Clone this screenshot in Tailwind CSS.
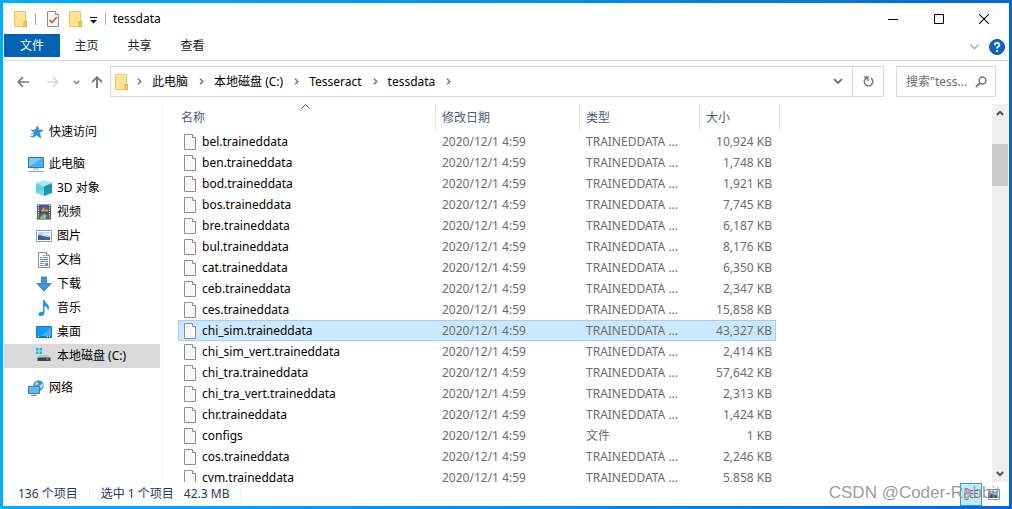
<!DOCTYPE html>
<html lang="zh-CN">
<head>
<meta charset="utf-8">
<title>tessdata</title>
<script src="https://cdn.jsdelivr.net/npm/@tailwindcss/browser@4"></script>
</head>
<body class="relative flex h-screen flex-col overflow-hidden bg-linear-to-r from-[#00adff] via-[#0090f5] to-[#0068dc] p-[3px] font-['Noto_Sans','Noto_Sans_CJK_SC',sans-serif] text-xs text-black">
<svg class="hidden">
  <symbol id="folder" viewBox="0 0 13 16"><path d="M.5.5h11v9.300h1v5.700H.5z" fill="#ffe396" stroke="#edc55c"/><path d="M10 10.500h2.500v5H10z" fill="#f3cb60" stroke="#e3b341"/></symbol>
  <symbol id="file" viewBox="0 0 12 16"><path d="M.5.5h8l3 3v12H.5z" fill="#f8f9fa" stroke="#8e8e8e"/><path d="M8.500.5v3h3" fill="#fff" stroke="#8e8e8e"/></symbol>
  <symbol id="crumb" viewBox="0 0 5 7"><path d="M1 .7 3.800 3.500 1 6.300" fill="none" stroke="#777" stroke-width="1.500"/></symbol>
</svg>
<div class="flex min-h-0 flex-1 flex-col bg-white">
  <header class="flex h-[31px] shrink-0 items-center pl-[11px]">
    <svg class="h-4 w-[13px]"><use href="#folder"/></svg>
    <span class="ml-2 h-3 w-px bg-[#aaa]"></span>
    <button aria-label="属性" class="ml-[11px]"><svg class="h-4 w-3" viewBox="0 0 12 16"><path d="M.5.5h8l3 3v12H.5z" fill="#f4f5f8" stroke="#8a8a8a"/><path d="M8.500.5v3h3" fill="#fff" stroke="#8a8a8a"/><path d="m2.500 9 2.500 2.500L9.800 6" fill="none" stroke="#e8601c" stroke-width="1.800"/></svg></button>
    <button aria-label="新建文件夹" class="ml-[10px]"><svg class="h-4 w-[13px]"><use href="#folder"/></svg></button>
    <button aria-label="自定义快速访问工具栏" class="ml-2"><svg class="h-4 w-[7px]" viewBox="0 0 7 16"><path d="M0 6.500h7" stroke="#111"/><path d="M0 9h7l-3.500 3.500z" fill="#111"/></svg></button>
    <span class="ml-2 h-3 w-px bg-[#aaa]"></span>
    <h1 class="ml-[7px]">tessdata</h1>
    <div class="ml-auto flex h-full pr-[2px]">
      <button aria-label="最小化" class="grid w-[46px] place-items-center"><svg class="size-[10px]" viewBox="0 0 10 10"><path d="M0 5.500h10" stroke="#000"/></svg></button>
      <button aria-label="最大化" class="grid w-[45px] place-items-center"><svg class="size-[10px]" viewBox="0 0 10 10"><path d="M.5.5h9v9h-9z" fill="none" stroke="#000"/></svg></button>
      <button aria-label="关闭" class="grid w-[46px] place-items-center"><svg class="size-[10px]" viewBox="0 0 10 10"><path d="m0 0 10 10M10 0 0 10" stroke="#000" stroke-width="1.100"/></svg></button>
    </div>
  </header>
  <nav aria-label="功能区" class="flex h-[27px] shrink-0 border-b border-[#dadbdc] pl-px text-[#222]">
    <button class="h-[23px] w-14 bg-[#0063b1] text-white">文件</button>
    <button class="h-[23px] w-[53px]">主页</button>
    <button class="h-[23px] w-[53px]">共享</button>
    <button class="h-[23px] w-[53px]">查看</button>
    <button aria-label="展开功能区" class="ml-auto"><svg class="h-[6px] w-[9px]" viewBox="0 0 9 6"><path d="m.5.7 4 4 4-4" fill="none" stroke="#999" stroke-width="1.200"/></svg></button>
    <button aria-label="帮助" class="mr-1 ml-[10px]"><svg class="size-4" viewBox="0 0 16 16"><circle cx="8" cy="8" r="7.500" fill="#0b67c2" stroke="#0a4f96"/><path d="M5.800 6.200c0-3 4.600-3 4.600-.3 0 1.700-2.300 1.600-2.300 3.700" fill="none" stroke="#fff" stroke-width="1.800"/><circle cx="8.100" cy="11.900" r="1.100" fill="#fff"/></svg></button>
  </nav>
  <div class="flex h-[43px] shrink-0 items-start pt-[5px] pr-[13px]">
    <div class="flex h-8 w-[107px] items-center pl-[14px]">
      <button aria-label="后退"><svg class="size-3" viewBox="0 0 12 12"><path d="M12 6H1.500M6 1.200 1.200 6 6 10.800" fill="none" stroke="#777" stroke-width="1.700"/></svg></button>
      <button aria-label="前进" class="ml-[18px]"><svg class="size-3" viewBox="0 0 12 12"><path d="M0 6h10.500M6 1.200 10.800 6 6 10.800" fill="none" stroke="#d8d8d8" stroke-width="1.700"/></svg></button>
      <button aria-label="最近位置" class="ml-[14px]"><svg class="h-[5px] w-[7px]" viewBox="0 0 7 5"><path d="m.7.8 2.800 2.800L6.300.8" fill="none" stroke="#888" stroke-width="1.500"/></svg></button>
      <button aria-label="上移" class="ml-[11px]"><svg class="h-3 w-[12px]" viewBox="0 0 12 12"><path d="M6 12V1.500M1 6.200l5-5 5 5" fill="none" stroke="#777" stroke-width="1.900"/></svg></button>
    </div>
    <div class="flex h-[31px] flex-1 items-center border border-[#d9d9d9] pl-1">
      <svg class="mr-[9px] h-4 w-[13px]"><use href="#folder"/></svg>
      <svg class="h-[7px] w-[5px]"><use href="#crumb"/></svg>
      <button class="mr-[11px] ml-[10px]">此电脑</button>
      <svg class="h-[7px] w-[5px]"><use href="#crumb"/></svg>
      <button class="mr-[11px] ml-[10px]">本地磁盘 (C:)</button>
      <svg class="h-[7px] w-[5px]"><use href="#crumb"/></svg>
      <button class="mr-[11px] ml-[10px]">Tesseract</button>
      <svg class="h-[7px] w-[5px]"><use href="#crumb"/></svg>
      <button class="mr-[11px] ml-[10px]">tessdata</button>
      <svg class="h-[7px] w-[5px]"><use href="#crumb"/></svg>
      <button aria-label="以前的位置" class="mr-[9px] ml-auto"><svg class="h-[7px] w-[10px]" viewBox="0 0 10 7"><path d="m1 1 4 4 4-4" fill="none" stroke="#777" stroke-width="1.900"/></svg></button>
      <button aria-label="刷新" class="grid h-full w-[31px] place-items-center border-l border-[#d9d9d9]"><svg class="size-[11px]" viewBox="0 0 11 11"><path d="M8.200 2.300A4.200 4.200 0 1 1 2 3.400L4.300 1.500" fill="none" stroke="#777" stroke-width="1.600"/><path d="M.8.900h4v4" fill="none" stroke="#777" stroke-width="1.500"/></svg></button>
    </div>
    <label class="ml-3 flex h-[31px] w-[100px] items-center border border-[#d9d9d9] pr-2 pl-[9px]">
      <input type="text" aria-label="搜索" placeholder='搜索"tess...' class="w-0 flex-1 outline-none placeholder:text-[#6d6d6d]">
      <svg class="size-3" viewBox="0 0 12 12"><circle cx="7.500" cy="4.500" r="3.400" fill="none" stroke="#777" stroke-width="1.500"/><path d="M5 7 .8 11.200" stroke="#777" stroke-width="1.900"/></svg>
    </label>
  </div>
  <div class="flex min-h-0 flex-1">
    <aside class="w-[160px] shrink-0 border-r border-[#f3f3f3] pt-4 pr-[2px] pl-px">
      <a href="#" class="flex h-6 items-center gap-[5px] pl-6"><svg class="size-4" viewBox="0 0 16 16"><path d="m9.500 2 1.200 4 4.300.2-3.500 2.600 1.200 5.200-4-2.900-4 2.400 1.500-4.700L3 6.200l4.300-.1z" fill="#2796e6" stroke="#1579c8" stroke-width=".6"/><path d="M4 7.500h2M2.500 10H6M2 12.500h3.500" stroke="#5bb4ef"/></svg>快速访问</a>
      <a href="#" class="mt-2 flex h-6 items-center gap-[5px] pl-6"><svg class="size-4" viewBox="0 0 16 16"><path d="M.5 1.500h15v10H.5z" fill="#42b1fa" stroke="#3a7399"/><path d="M1 11V2h13z" fill="#78cbff"/><path d="M5 13h6M0 15.500h16" stroke="#8ba0b5"/></svg>此电脑</a>
      <a href="#" class="flex h-6 items-center gap-[5px] pl-8"><svg class="size-4" viewBox="0 0 16 16"><path d="m8 0 8 3-8 3.500L0 3z" fill="#a8eaf2"/><path d="m0 3 8 3.500V16l-8-3z" fill="#5fd2e2"/><path d="m16 3-8 3.500V16l8-3z" fill="#1799b4"/><path d="m0 13 8-3v6z" fill="#8ee5ee" opacity=".6"/></svg>3D 对象</a>
      <a href="#" class="flex h-6 items-center gap-[5px] pl-8"><svg class="size-4" viewBox="0 0 16 16"><path d="M1 .5h14v15H1z" fill="#404040"/><path d="M4 1h8v6.500H4zM4 8.500h8V15H4z" fill="#345caa"/><path d="M2.500 1v14M13.500 1v14" stroke="#eee" stroke-width="1.500" stroke-dasharray="1.300 1"/><path d="M5 6.500 8 3l4 3v1.500H5z" fill="#d9a52c"/><path d="M4 13 8 9.500l2 2V15H4z" fill="#7bb661"/><circle cx="9.500" cy="4.500" r="1.500" fill="#c8492e"/><circle cx="9" cy="12" r="1.500" fill="#e0b23d"/></svg>视频</a>
      <a href="#" class="flex h-6 items-center gap-[5px] pl-8"><svg class="size-4" viewBox="0 0 16 16"><path d="M.5 2.500h15v11H.5z" fill="#fff" stroke="#999"/><path d="M2 4h12v8H2z" fill="#b5dbf8"/><path d="M2 7c4 0 5 2 12 2v3H2z" fill="#3b6c86"/><path d="M2 10.500h12V12H2z" fill="#2f67b5"/><path d="M8 5h6v2H8z" fill="#e5f4ff"/></svg>图片</a>
      <a href="#" class="flex h-6 items-center gap-[5px] pl-8"><svg class="size-4" viewBox="0 0 16 16"><path d="M2.500.5h8l3 3v12h-11z" fill="#fff" stroke="#8a8a8a"/><path d="M10.500.5v3h3" fill="#eee" stroke="#8a8a8a"/><path d="M7 3.500h2M7 5.500h5M4 9.500h8M4 11.500h4M4 13.500h4" stroke="#7d93a8"/><path d="M4 5.500h2M4 7.500h8" stroke="#2d91d5"/><path d="M9 11h3v3H9z" fill="#3aa0dc"/></svg>文档</a>
      <a href="#" class="flex h-6 items-center gap-[5px] pl-8"><svg class="size-4" viewBox="0 0 16 16"><path d="M5.500 1h5v6.500h4.700L8 15.200.8 7.500h4.700z" fill="#3f93dc" stroke="#2c74b8" stroke-width=".8"/></svg>下载</a>
      <a href="#" class="flex h-6 items-center gap-[5px] pl-8"><svg class="size-4" viewBox="0 0 16 16"><path d="M7 0h1.500c.5 3 4.500 4 4.500 7.500 0 1.300-.6 2.400-1.400 3.300.6-2.500-.8-4-3.100-4.800V13c0 3.500-6 4-6 1.200 0-2 2.500-3 4.500-2.400z" fill="#129bec"/></svg>音乐</a>
      <a href="#" class="flex h-6 items-center gap-[5px] pl-8"><svg class="size-4" viewBox="0 0 16 16"><path d="M.5 2.500h15v11H.5z" fill="#129cf4" stroke="#1581c6"/><path d="M15 3v9L5 12z" fill="#3db0fb"/><path d="M1 13h14" stroke="#0c5e94"/><path d="M2 12.500h1M11 12.500h1M13 12.500h1" stroke="#fff"/></svg>桌面</a>
      <a href="#" aria-current="page" class="flex h-6 items-center gap-[5px] bg-[#d9d9d9] pl-8"><svg class="size-4" viewBox="0 0 16 16"><path d="M0 0h2.500v2.500H0zM3.500 0H6v2.500H3.500zM0 3.500h2.500V6H0zM3.500 3.500H6V6H3.500z" fill="#15b4ea"/><path d="M4 7h8l2.500 3H1.500z" fill="#bfc3c6"/><path d="M1.500 9.500h13V13h-13z" fill="#3d4246"/><path d="M10.500 11h2" stroke="#6fe36f"/></svg>本地磁盘 (C:)</a>
      <a href="#" class="mt-2 flex h-6 items-center gap-[5px] pl-6"><svg class="size-4" viewBox="0 0 16 16"><circle cx="10.500" cy="5.500" r="5.300" fill="#4c8db2"/><path d="M7 3c2-2 4-1 3 1S7 6 7 3M11 6l4-3c1 2 0 4-2 6z" fill="#a9d9ec"/><path d="M.5 6.500h11v7H.5z" fill="#5ab9f7" stroke="#3a80b0"/><path d="M3 15.500h6M6 14v1.500" stroke="#7b93a8"/></svg>网络</a>
    </aside>
    <main class="flex min-w-0 flex-1">
      <div class="min-w-0 flex-1 overflow-hidden pl-[15px]">
        <table class="w-[602px] table-fixed border-separate border-spacing-0">
          <colgroup><col class="w-[258px]"><col class="w-[144px]"><col class="w-[120px]"><col class="w-[76px]"><col class="w-1"></colgroup>
          <thead class="text-[#4c607a]">
            <tr class="h-[27px] text-left">
              <th class="relative border-r border-[#e5e5e5] py-0 pl-[3px] font-normal">名称<svg class="absolute top-0 left-[123px] h-[5px] w-[9px]" viewBox="0 0 9 5"><path d="m.5 4.500 4-4 4 4" fill="none" stroke="#555"/></svg></th>
              <th class="border-r border-[#e5e5e5] py-0 pl-[6px] font-normal">修改日期</th>
              <th class="border-r border-[#e5e5e5] py-0 pl-[6px] font-normal">类型</th>
              <th colspan="2" class="border-r border-[#e5e5e5] py-0 pl-[6px] font-normal">大小</th>
            </tr>
          </thead>
          <tbody id="files"></tbody>
        </table>
      </div>
      <div class="flex w-[17px] shrink-0 flex-col pr-px">
        <div class="flex flex-1 flex-col items-center bg-[#f0f0f0]">
          <button aria-label="向上滚动" class="grid h-[17px] place-items-center"><svg class="h-[6px] w-2" viewBox="0 0 8 6"><path d="m.8 5 3.200-3.200L7.200 5" fill="none" stroke="#505050" stroke-width="2"/></svg></button>
          <div class="mt-[23px] h-[42px] w-full bg-[#cdcdcd]"></div>
          <button aria-label="向下滚动" class="mt-auto grid h-[17px] place-items-center"><svg class="h-[6px] w-2" viewBox="0 0 8 6"><path d="m.8 1 3.200 3.200L7.200 1" fill="none" stroke="#505050" stroke-width="2"/></svg></button>
        </div>
      </div>
    </main>
  </div>
  <footer class="flex h-6 shrink-0 items-center pr-[9px] pl-[15px] text-[#1e395b]">
    <span>136 个项目</span>
    <span class="mx-[11px] h-3 w-px bg-[#f0f0f0]"></span>
    <span>选中 1 个项目</span><span class="ml-[10px]">42.3 MB</span>
    <span class="mx-[11px] h-3 w-px bg-[#f0f0f0]"></span>
    <button aria-label="详细信息" class="ml-auto grid h-[23px] w-[22px] place-items-center border border-[#26a0da] bg-[#c5e6f5]"><svg class="h-3 w-4" viewBox="0 0 16 12"><path d="M2 .5h3v11H2z" fill="#fff" stroke="#888"/><path d="M3 3h1M3 6h1" stroke="#456"/><path d="M3 10h1" stroke="#d33"/><path d="M7 2.500h3m2 0h3M7 5.500h3m2 0h3M7 9.500h3m2 0h3" stroke="#567"/></svg></button>
    <button aria-label="大缩略图" class="ml-[6px]"><svg class="h-[11px] w-3" viewBox="0 0 12 11"><path d="M.5.5h11v10H.5z" fill="#fff" stroke="#8a93a0"/><path d="M1 2h8v7H1z" fill="#8bbfe8"/><path d="M1 5c3-1 4 2 8 1v3H1z" fill="#27516e"/></svg></button>
  </footer>
</div>
<p class="pointer-events-none absolute right-[12px] bottom-1 font-['Liberation_Sans',sans-serif] text-[17px] leading-6 text-[#8f8f8f]/90">CSDN @Coder-Rabbit</p>
<script>
const files = [
  ["bel.traineddata", "10,924 KB"], ["ben.traineddata", "1,748 KB"], ["bod.traineddata", "1,921 KB"],
  ["bos.traineddata", "7,745 KB"], ["bre.traineddata", "6,187 KB"], ["bul.traineddata", "8,176 KB"],
  ["cat.traineddata", "6,350 KB"], ["ceb.traineddata", "2,347 KB"], ["ces.traineddata", "15,858 KB"],
  ["chi_sim.traineddata", "43,327 KB"], ["chi_sim_vert.traineddata", "2,414 KB"], ["chi_tra.traineddata", "57,642 KB"],
  ["chi_tra_vert.traineddata", "2,313 KB"], ["chr.traineddata", "1,424 KB"], ["configs", "1 KB"],
  ["cos.traineddata", "2,246 KB"], ["cym.traineddata", "5,858 KB"]
];
document.getElementById("files").innerHTML = files.map(([name, size]) => {
  const on = name === "chi_sim.traineddata";
  const c = on ? "border-y border-[#99d1ff] bg-[#cce8ff]" : "border-y border-transparent";
  return `<tr class="h-[21px] text-[#6d6d6d]">
    <td class="p-0 ${c} ${on ? "border-l" : "border-l border-l-transparent"}"><div class="flex h-[19px] items-center gap-[6px] pl-[5px] text-black"><svg class="h-4 w-3"><use href="#file"/></svg>${name}</div></td>
    <td class="py-0 pr-0 pl-[6px] leading-[19px] ${c}">2020/12/1 4:59</td>
    <td class="truncate py-0 pr-0 pl-[6px] leading-[19px] ${c}">${name === "configs" ? "文件" : "TRAINEDDATA ..."}</td>
    <td class="py-0 pr-[3px] pl-0 text-right leading-[19px] whitespace-nowrap ${c} ${on ? "border-r" : "border-r border-r-transparent"}">${size}</td></tr>`;
}).join("");
</script>
</body>
</html>
